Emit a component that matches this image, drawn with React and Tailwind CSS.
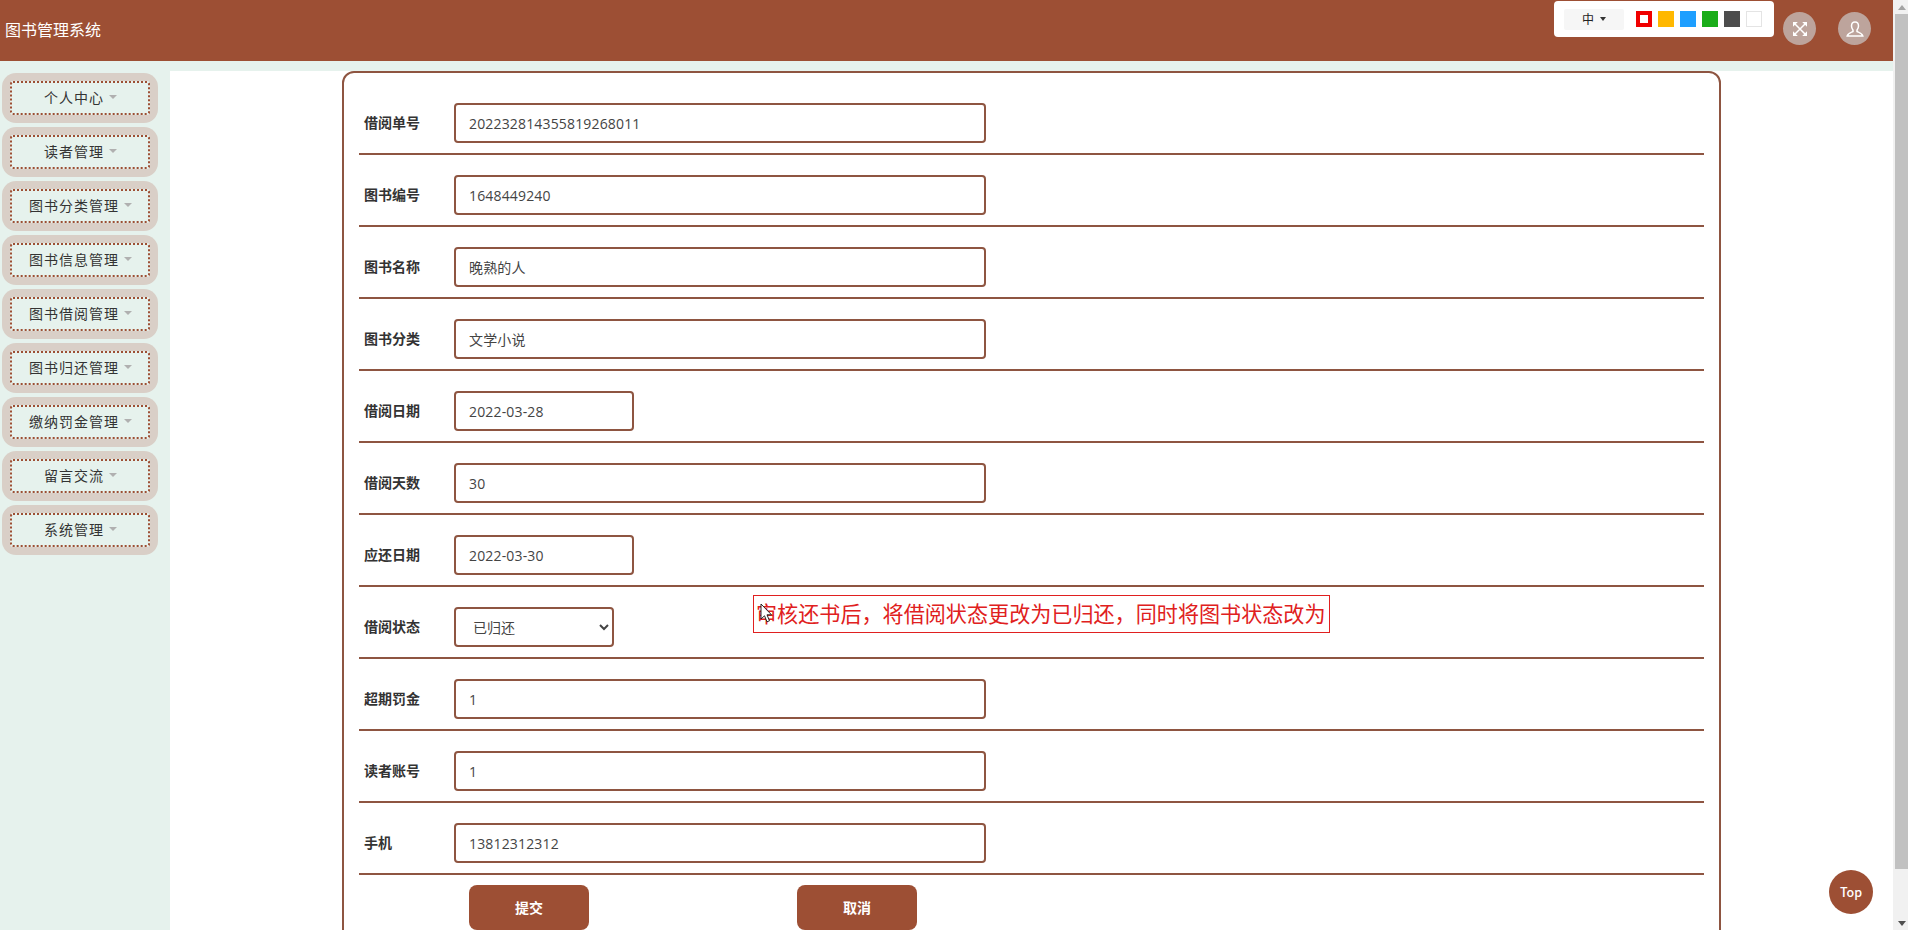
const menus = ['个人中心', '读者管理', '图书分类管理', '图书信息管理', '图书借阅管理', '图书归还管理', '缴纳罚金管理', '留言交流', '系统管理'];

const rows = [
  { label: '借阅单号', value: '202232814355819268011', width: 'w-[532px]' },
  { label: '图书编号', value: '1648449240', width: 'w-[532px]' },
  { label: '图书名称', value: '晚熟的人', width: 'w-[532px]' },
  { label: '图书分类', value: '文学小说', width: 'w-[532px]' },
  { label: '借阅日期', value: '2022-03-28', width: 'w-[180px]' },
  { label: '借阅天数', value: '30', width: 'w-[532px]' },
  { label: '应还日期', value: '2022-03-30', width: 'w-[180px]' },
  { label: '借阅状态', select: true },
  { label: '超期罚金', value: '1', width: 'w-[532px]' },
  { label: '读者账号', value: '1', width: 'w-[532px]' },
  { label: '手机', value: '13812312312', width: 'w-[532px]' },
];

function SideItem({ name }) {
  return (
    <div className="h-[50px] w-[156px] ml-[2px] mb-1 p-2 rounded-[14px] bg-[#d9cfc7]">
      <div className="h-[34px] pb-[2px] pl-[1px] flex items-center justify-center gap-[5px] border-2 border-dotted border-[#9d4f34] rounded-[3px] bg-[#e6f2ed] text-[14px] tracking-[1px] text-[#333]">
        <span>{name}</span>
        <span className="w-0 h-0 border-x-[4px] border-x-transparent border-t-[4px] border-t-[#b0b0b0]" />
      </div>
    </div>
  );
}

function FormRow({ row }) {
  return (
    <div className="flex items-center h-[72px] pt-5 pb-[10px] border-b-2 border-[#8e5541]">
      <label className="w-[95px] pl-[5px] pb-[2px] text-[14px] font-bold text-[#333]">{row.label}</label>
      {row.select ? (
        <select defaultValue="已归还" className="w-[160px] h-10 pl-[13px] pr-1 border-2 border-[#8e5541] rounded-[4px] bg-white text-[14px] text-[#444]">
          <option>未归还</option>
          <option>已归还</option>
        </select>
      ) : (
        <input defaultValue={row.value} className={`${row.width} h-10 px-[13px] border-2 border-[#8e5541] rounded-[4px] bg-white font-['Open_Sans','Noto_Sans_CJK_SC',sans-serif] text-[14px] tracking-[0.16px] text-[#444] outline-none`} />
      )}
    </div>
  );
}

function Settings() {
  return (
    <div className="absolute top-[1px] right-[119px] w-[220px] h-9 flex items-center pl-[10px] gap-[6px] bg-white rounded-[4px]">
      <div className="w-[60px] h-[21px] mr-[6px] flex items-center justify-center gap-[6px] bg-[#f6f6f6] rounded-[2px] text-[12px] text-[#222]">
        <span>中</span>
        <span className="w-0 h-0 border-x-[3px] border-x-transparent border-t-[4px] border-t-[#333]" />
      </div>
      <div className="w-4 h-4 border-[4px] border-[#f00000] bg-white" />
      <div className="w-4 h-4 bg-[#ffb800]" />
      <div className="w-4 h-4 bg-[#1e9fff]" />
      <div className="w-4 h-4 bg-[#1aad19]" />
      <div className="w-4 h-4 bg-[#4d4d4d]" />
      <div className="w-4 h-4 border border-[#e4e4e4] bg-white" />
    </div>
  );
}

function Cursor() {
  return (
    <svg className="absolute left-[760px] top-[603px]" width="14" height="21" viewBox="0 0 14 21">
      <path d="M1 1 L1 16 L4.5 12.8 L7 18.8 L9.5 17.8 L7 11.8 L11.5 11.8 Z" fill="#fff" stroke="#111" strokeWidth="0.9" />
    </svg>
  );
}

export default function App() {
  return (
    <div className="relative h-screen flex overflow-hidden bg-white font-['Noto_Sans_CJK_SC','Noto_Sans',sans-serif]">
      <div className="flex-1 min-w-0 flex flex-col">
        <header className="relative h-[61px] shrink-0 flex items-center bg-[#9d4f34]">
          <span className="pl-[5px] pb-[3px] text-[16px] text-white">图书管理系统</span>
          <Settings />
          <div className="absolute top-3 right-[77px] w-[33px] h-[33px] flex items-center justify-center rounded-full bg-[#bda49c]">
            <svg width="16" height="16" viewBox="0 0 16 16" fill="#fff" stroke="none">
              <path d="M3 3 L13 13 M13 3 L3 13" stroke="#fff" strokeWidth="1.5" />
              <polygon points="1,1 5.8,1 1,5.8" />
              <polygon points="15,1 10.2,1 15,5.8" />
              <polygon points="1,15 5.8,15 1,10.2" />
              <polygon points="15,15 10.2,15 15,10.2" />
            </svg>
          </div>
          <div className="absolute top-3 right-[22px] w-[33px] h-[33px] flex items-center justify-center rounded-full bg-[#bda49c]">
            <svg width="18" height="16" viewBox="0 0 18 16" fill="none" stroke="#fff" strokeWidth="1.5">
              <path d="M9 1 C6.5 1 5.5 3 5.5 5 C5.5 7 6.3 8 7 9 L7 10.5 C5 11.5 2 12 1.2 15 L16.8 15 C16 12 13 11.5 11 10.5 L11 9 C11.7 8 12.5 7 12.5 5 C12.5 3 11.5 1 9 1 Z" />
            </svg>
          </div>
        </header>
        <div className="flex-1 min-h-0 flex bg-[#e6f2ed] pt-[10px]">
          <aside className="w-[170px] shrink-0 pt-[2px]">
            {menus.map((m) => <SideItem key={m} name={m} />)}
          </aside>
          <main className="flex-1 min-w-0 bg-white">
            <div className="w-[1379px] ml-[172px] pt-[10px] pb-5 px-[15px] border-2 border-[#8e5541] rounded-[12px] bg-white">
              {rows.map((r) => <FormRow key={r.label} row={r} />)}
              <div className="flex pt-[10px]">
                <button className="ml-[110px] w-[120px] h-[45px] rounded-[8px] bg-[#9d4f34] text-[14px] font-bold text-white">提交</button>
                <button className="ml-[208px] w-[120px] h-[45px] rounded-[8px] bg-[#9d4f34] text-[14px] font-bold text-white">取消</button>
              </div>
            </div>
          </main>
        </div>
      </div>

      <div className="w-[15px] shrink-0 flex flex-col items-end bg-[#f1f1f1]">
        <div className="w-[13px] h-[14px] flex items-center justify-center">
          <span className="w-0 h-0 border-x-[4px] border-x-transparent border-b-[5px] border-b-[#a3a3a3]" />
        </div>
        <div className="w-[13px] h-[855px] bg-[#c1c1c1]" />
        <div className="flex-1 w-[13px] flex items-end justify-center pb-1">
          <span className="w-0 h-0 border-x-[4px] border-x-transparent border-t-[5px] border-t-[#505050]" />
        </div>
      </div>

      <div className="absolute top-[595px] left-[753px] h-[38px] w-[577px] flex items-center pl-[2px] border border-[#e02020] text-[21.1px] text-[#e02020] whitespace-nowrap">
        审核还书后，将借阅状态更改为已归还，同时将图书状态改为
      </div>
      <Cursor />
      <div className="absolute top-[870px] left-[1829px] w-11 h-11 flex items-center justify-center rounded-full bg-[#9d4f34] text-[12.5px] font-medium text-white">Top</div>
    </div>
  );
}
